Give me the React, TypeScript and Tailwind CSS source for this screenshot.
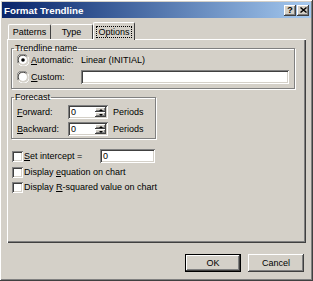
import React from 'react';

const raised =
  'bg-[#d4d0c8] shadow-[inset_-1px_-1px_#404040,inset_1px_1px_#fff,inset_-2px_-2px_#808080,inset_2px_2px_#d4d0c8]';
const sunken =
  'bg-white shadow-[inset_1px_1px_#808080,inset_-1px_-1px_#fff,inset_2px_2px_#404040,inset_-2px_-2px_#d4d0c8]';
const etched = 'border border-[#808080] shadow-[1px_1px_0_#fff,inset_1px_1px_0_#fff]';

function Radio({ checked }: { checked?: boolean }) {
  return (
    <svg width="12" height="12" viewBox="0 0 12 12" className="shrink-0">
      <path d="M10 2 A5.5 5.5 0 0 0 1 9" fill="none" stroke="#808080" strokeWidth="1" />
      <path d="M9.5 3 A4.5 4.5 0 0 0 2 8.5" fill="none" stroke="#404040" strokeWidth="1" />
      <circle cx="6" cy="6" r="4" fill="#fff" />
      <path d="M2 10 A5.5 5.5 0 0 0 11 3" fill="none" stroke="#fff" strokeWidth="1" />
      <path d="M2.8 9.2 A4.5 4.5 0 0 0 9.2 2.8" fill="none" stroke="#d4d0c8" strokeWidth="1" />
      {checked && <circle cx="6" cy="6" r="1.8" fill="#000" />}
    </svg>
  );
}

function Check() {
  return <div className={`h-[11px] w-[11px] shrink-0 ${sunken}`} />;
}

function Spin({ value }: { value: string }) {
  return (
    <div className={`flex h-[14px] w-[40px] items-stretch p-[2px] ${sunken}`}>
      <span className="flex-1 pl-[1px] leading-[10px]">{value}</span>
      <div className="flex w-[11px] flex-col">
        <div className={`flex flex-1 items-center justify-center ${raised}`}>
          <div className="h-0 w-0 border-x-[2.5px] border-b-[2.5px] border-x-transparent border-b-black" />
        </div>
        <div className={`flex flex-1 items-center justify-center ${raised}`}>
          <div className="h-0 w-0 border-x-[2.5px] border-t-[2.5px] border-x-transparent border-t-black" />
        </div>
      </div>
    </div>
  );
}

function TitleButton({ children }: { children: React.ReactNode }) {
  return (
    <div className={`flex h-[11px] w-[12px] items-center justify-center text-[9px] font-bold leading-none text-black ${raised}`}>
      {children}
    </div>
  );
}

export default function App() {
  return (
    <div
      className={`flex h-[281px] w-[313px] flex-col p-[2px] text-[9px] leading-[11px] text-black ${raised}`}
      style={{ fontFamily: '"Liberation Sans", Arial, sans-serif' }}
    >
      <div className="flex h-[16px] items-center bg-gradient-to-r from-[#0a246a] to-[#a6caf0] pl-[2px] pr-[2px]">
        <span className="flex-1 text-[9.8px] font-bold text-white">Format Trendline</span>
        <div className="flex gap-[1px]">
          <TitleButton>?</TitleButton>
          <TitleButton>
            <svg width="7" height="6" viewBox="0 0 7 6">
              <path d="M0.5 0.5 L6.5 5.5 M6.5 0.5 L0.5 5.5" stroke="#000" strokeWidth="1.4" />
            </svg>
          </TitleButton>
        </div>
      </div>

      <div className="mt-[4px] flex flex-1 flex-col px-[5px]">
        <div className="relative z-10 flex h-[17px] items-end pl-[1px]">
          <div className="flex h-[15px] w-[43px] items-center justify-center rounded-t-[2px] border-l border-r border-t border-white border-r-[#404040]">
            Patterns
          </div>
          <div className="flex h-[15px] w-[42px] items-center justify-center rounded-t-[2px] border-r border-t border-white border-r-[#404040]">
            Type
          </div>
          <div className="-mb-[1px] flex h-[18px] w-[42px] items-center justify-center rounded-t-[2px] border-l border-r border-t border-white border-r-[#404040] bg-[#d4d0c8]">
            <span className="border border-dotted border-black px-[1px] leading-[10px]">Options</span>
          </div>
        </div>

        <div className="flex h-[204px] w-[299px] flex-col border-l border-t border-white pl-[3px] shadow-[inset_-1px_-1px_#404040,inset_-2px_-2px_#808080]">
          <fieldset className={`mt-[3px] w-[284px] ${etched} pb-[4px]`}>
            <legend className="ml-[2px] px-[1px] leading-[11px]">Trendline name</legend>
            <div className="flex h-[12px] items-center pl-[5px]">
              <Radio checked />
              <span className="ml-[2px] w-[50px]"><u>A</u>utomatic:</span>
              <span>Linear (INITIAL)</span>
            </div>
            <div className="mt-[4px] flex h-[14px] items-center pl-[5px]">
              <Radio />
              <span className="ml-[2px] w-[50px]"><u>C</u>ustom:</span>
              <div className={`h-[14px] w-[208px] ${sunken}`} />
            </div>
          </fieldset>

          <fieldset className={`mt-[3px] w-[145px] ${etched} pb-[2px]`}>
            <legend className="ml-[2px] px-[1px] leading-[11px]">Forecast</legend>
            <div className="mt-[2px] flex h-[14px] items-center pl-[5px]">
              <span className="w-[51px]"><u>F</u>orward:</span>
              <Spin value="0" />
              <span className="ml-[5px]">Periods</span>
            </div>
            <div className="mt-[3px] flex h-[14px] items-center pl-[5px]">
              <span className="w-[51px]"><u>B</u>ackward:</span>
              <Spin value="0" />
              <span className="ml-[5px]">Periods</span>
            </div>
          </fieldset>

          <div className="mt-[10px] flex h-[14px] items-center pl-[1px]">
            <Check />
            <span className="ml-[1px] w-[76px]"><u>S</u>et intercept =</span>
            <div className={`h-[14px] w-[55px] p-[2px] pl-[3px] leading-[10px] ${sunken}`}>0</div>
          </div>
          <div className="mt-[3px] flex h-[12px] items-center pl-[1px]">
            <Check />
            <span className="ml-[1px]">Display <u>e</u>quation on chart</span>
          </div>
          <div className="mt-[3px] flex h-[12px] items-center pl-[1px]">
            <Check />
            <span className="ml-[1px]">Display <u>R</u>-squared value on chart</span>
          </div>
        </div>

        <div className="mt-[11px] flex justify-end gap-[7px] pr-[2px]">
          <div className="border border-black">
            <div className={`flex h-[16px] w-[54px] items-center justify-center ${raised}`}>OK</div>
          </div>
          <div className={`flex h-[18px] w-[56px] items-center justify-center ${raised}`}>Cancel</div>
        </div>
      </div>
    </div>
  );
}
